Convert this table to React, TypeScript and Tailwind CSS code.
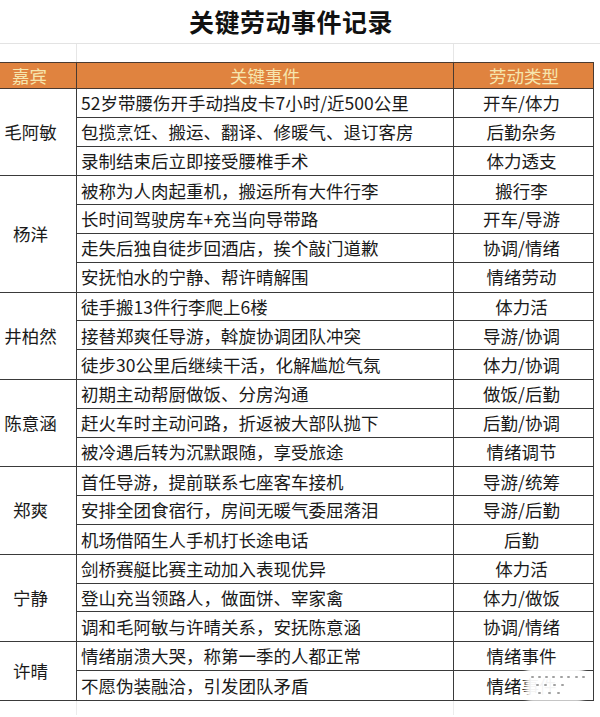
import React from "react";

type Group = { name: string; rows: [string, string][] };

const groups: Group[] = [
  {
    name: "毛阿敏",
    rows: [
      ["52岁带腰伤开手动挡皮卡7小时/近500公里", "开车/体力"],
      ["包揽烹饪、搬运、翻译、修暖气、退订客房", "后勤杂务"],
      ["录制结束后立即接受腰椎手术", "体力透支"],
    ],
  },
  {
    name: "杨洋",
    rows: [
      ["被称为人肉起重机，搬运所有大件行李", "搬行李"],
      ["长时间驾驶房车+充当向导带路", "开车/导游"],
      ["走失后独自徒步回酒店，挨个敲门道歉", "协调/情绪"],
      ["安抚怕水的宁静、帮许晴解围", "情绪劳动"],
    ],
  },
  {
    name: "井柏然",
    rows: [
      ["徒手搬13件行李爬上6楼", "体力活"],
      ["接替郑爽任导游，斡旋协调团队冲突", "导游/协调"],
      ["徒步30公里后继续干活，化解尴尬气氛", "体力/协调"],
    ],
  },
  {
    name: "陈意涵",
    rows: [
      ["初期主动帮厨做饭、分房沟通", "做饭/后勤"],
      ["赶火车时主动问路，折返被大部队抛下", "后勤/协调"],
      ["被冷遇后转为沉默跟随，享受旅途", "情绪调节"],
    ],
  },
  {
    name: "郑爽",
    rows: [
      ["首任导游，提前联系七座客车接机", "导游/统筹"],
      ["安排全团食宿行，房间无暖气委屈落泪", "导游/后勤"],
      ["机场借陌生人手机打长途电话", "后勤"],
    ],
  },
  {
    name: "宁静",
    rows: [
      ["剑桥赛艇比赛主动加入表现优异", "体力活"],
      ["登山充当领路人，做面饼、宰家禽", "体力/做饭"],
      ["调和毛阿敏与许晴关系，安抚陈意涵", "协调/情绪"],
    ],
  },
  {
    name: "许晴",
    rows: [
      ["情绪崩溃大哭，称第一季的人都正常", "情绪事件"],
      ["不愿伪装融洽，引发团队矛盾", "情绪事件"],
    ],
  },
];

const dotRows = [
  { top: 676, xs: [531, 538, 545, 552, 560, 567, 575, 582] },
  { top: 684, xs: [536, 544, 553, 561] },
  { top: 692, xs: [538, 548, 557] },
];

export default function App() {
  return (
    <div
      className="relative w-[600px] h-[717px] overflow-hidden bg-white text-[#1a1a1a]"
      style={{ fontFamily: '"Noto Sans CJK SC", "Noto Sans", sans-serif' }}
    >
      {/* Title row */}
      <div className="h-[44px] flex items-center justify-center pr-[18px] border-b border-[#e3e3e3]">
        <span className="text-[25px] font-bold tracking-[0.5px] text-[#111]">关键劳动事件记录</span>
      </div>
      {/* empty spreadsheet row */}
      <div className="h-[18px] grid grid-cols-[77px_377px_140px_6px]">
        <div className="border-r border-[#e6e6e6]" />
        <div className="border-r border-[#e6e6e6]" />
        <div />
        <div />
      </div>
      {/* Header */}
      <div className="w-[594px] h-[27px] grid grid-cols-[77px_377px_140px] bg-[#e0833f] border-y-[1.5px] border-[#4a3a30] border-r-[1.5px] text-[#f6e6ae] text-[17.5px] leading-none">
        <div className="flex items-center justify-center pr-[17px] border-r-[1.5px] border-[#4a3a30]">嘉宾</div>
        <div className="flex items-center justify-center border-r-[1.5px] border-[#4a3a30]">关键事件</div>
        <div className="flex items-center justify-center">劳动类型</div>
      </div>
      {/* Body */}
      <div className="w-[594px] border-r-[1.5px] border-[#3a3a3a]">
        {groups.map((g) => (
          <div key={g.name} className="flex border-b-[1.5px] border-[#3a3a3a]">
            <div className="w-[77px] shrink-0 flex items-center justify-center pr-[15px] border-r-[1.5px] border-[#3a3a3a] text-[17.5px]">
              {g.name}
            </div>
            <div className="flex-1 flex flex-col">
              {g.rows.map(([ev, type], i) => (
                <div
                  key={i}
                  className={`h-[28.8px] grid grid-cols-[377px_1fr] text-[17.5px] leading-none ${
                    i < g.rows.length - 1 ? "border-b-[1.5px] border-[#3a3a3a]" : ""
                  }`}
                >
                  <div className="flex items-center pl-[4px] border-r-[1.5px] border-[#3a3a3a] whitespace-nowrap">
                    {ev}
                  </div>
                  <div className="flex items-center justify-center pr-[4px] whitespace-nowrap">{type}</div>
                </div>
              ))}
            </div>
          </div>
        ))}
      </div>
      {/* bottom spreadsheet gridlines */}
      <div className="h-[14px] grid grid-cols-[77px_377px_140px]">
        <div className="border-r border-[#ececec]" />
        <div className="border-r border-[#ececec]" />
        <div />
      </div>
      {/* watermark */}
      <div className="absolute left-[526px] top-[666px] w-[58px] h-[36px] bg-white/95 blur-[2px] rounded-md" />
      {dotRows.map((r) =>
        r.xs.map((x) => (
          <div
            key={`${r.top}-${x}`}
            className="absolute w-[3px] h-[2px] bg-[#a0a0a0] rounded-[1px]"
            style={{ left: x, top: r.top }}
          />
        ))
      )}
    </div>
  );
}
